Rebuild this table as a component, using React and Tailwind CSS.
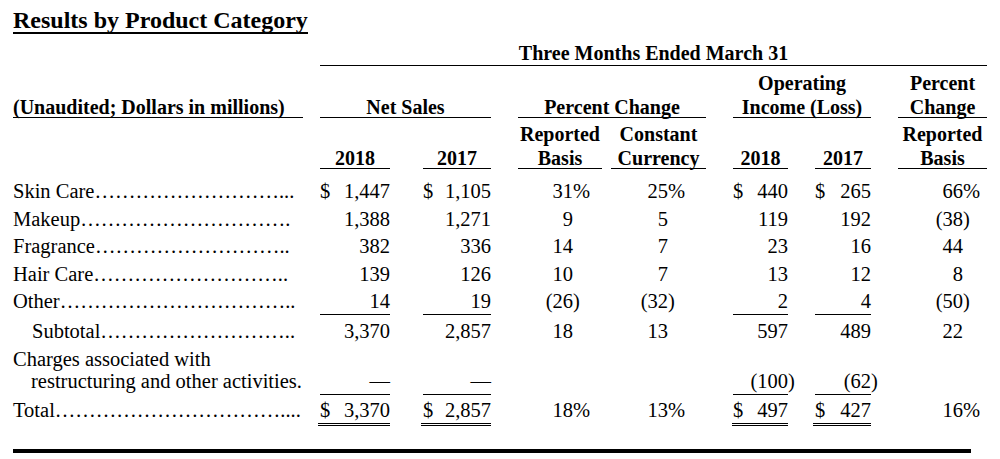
import React from "react";

const E = "\u2026";
const dots = (n, tail) => E.repeat(n) + tail;

function V({ v }) {
  if (!v) return null;
  if (v.startsWith("(")) {
    return (
      <>
        ({v.slice(1, -1)}
        <span className="inline-block w-0">)</span>
      </>
    );
  }
  if (v.endsWith("%")) {
    return (
      <>
        {v.slice(0, -1)}
        <span className="inline-block w-0">%</span>
      </>
    );
  }
  return v;
}

function Money({ cls, d, v }) {
  return (
    <div className={cls + " flex justify-between whitespace-nowrap"}>
      <span>{d ? "$" : ""}</span>
      <span>
        <V v={v} />
      </span>
    </div>
  );
}

const rows = [
  { label: "Skin Care", dots: dots(9, "..."), d: true, a: "1,447", b: "1,105", rb: "31%", cc: "25%", c: "440", e: "265", pc: "66%" },
  { label: "Makeup", dots: dots(10, "."), a: "1,388", b: "1,271", rb: "9", cc: "5", c: "119", e: "192", pc: "(38)" },
  { label: "Fragrance", dots: dots(9, ".."), a: "382", b: "336", rb: "14", cc: "7", c: "23", e: "16", pc: "44" },
  { label: "Hair Care", dots: dots(9, ".."), a: "139", b: "126", rb: "10", cc: "7", c: "13", e: "12", pc: "8" },
];

function DataRow({ r, rowCls, ul, indent }) {
  const u = ul ? " border-b border-black" : "";
  return (
    <div className={"flex " + rowCls}>
      <div className={"w-[290px] shrink-0 whitespace-nowrap" + (indent ? " pl-[19px]" : "")}>
        {r.label}
        {r.dots}
      </div>
      <Money cls={"ml-[17px] w-[70px] shrink-0" + u} d={r.d} v={r.a} />
      <Money cls={"ml-[33px] w-[68px] shrink-0" + u} d={r.d} v={r.b} />
      <div className="ml-[27px] w-[84px] shrink-0 text-right pr-[29px] whitespace-nowrap">
        <V v={r.rb} />
      </div>
      <div className="ml-[9px] w-[95px] shrink-0 text-right pr-[38px] whitespace-nowrap">
        <V v={r.cc} />
      </div>
      <Money cls={"ml-[27px] w-[55px] shrink-0" + u} d={r.d} v={r.c} />
      <Money cls={"ml-[27px] w-[56px] shrink-0" + u} d={r.d} v={r.e} />
      <div className="ml-[27px] w-[89px] shrink-0 text-right pr-[24px] whitespace-nowrap">
        <V v={r.pc} />
      </div>
    </div>
  );
}

export default function App() {
  return (
    <div className="min-h-[459px] w-[1000px] overflow-hidden bg-white text-black font-['Liberation_Serif','Times_New_Roman',serif] px-[13px] pt-[9px] flex flex-col">
      {/* Title */}
      <div className="self-start border-b-2 border-black text-[24px] font-bold leading-[23px] whitespace-nowrap">
        Results by Product Category
      </div>

      {/* Three Months Ended */}
      <div className="mt-[8px] ml-[307px] w-[667px] text-center font-bold text-[20px] leading-[23px] border-b border-black whitespace-nowrap">
        Three Months Ended March 31
      </div>

      {/* Header row B */}
      <div className="flex h-[52px] font-bold text-[20px] leading-[24px] whitespace-nowrap">
        <div className="w-[290px] shrink-0 flex flex-col justify-end border-b border-black">
          <div className="-mb-[2px]">(Unaudited; Dollars in millions)</div>
        </div>
        <div className="ml-[17px] w-[171px] shrink-0 flex flex-col justify-end text-center border-b border-black">
          <div className="-mb-[2px]">Net Sales</div>
        </div>
        <div className="ml-[27px] w-[188px] shrink-0 flex flex-col justify-end text-center border-b border-black">
          <div className="-mb-[2px]">Percent Change</div>
        </div>
        <div className="ml-[27px] w-[138px] shrink-0 flex flex-col justify-end text-center border-b border-black">
          <div className="-mb-[2px]">
            <div>Operating</div>
            <div>Income (Loss)</div>
          </div>
        </div>
        <div className="ml-[27px] w-[89px] shrink-0 flex flex-col justify-end text-center border-b border-black">
          <div className="-mb-[2px]">
            <div>Percent</div>
            <div>Change</div>
          </div>
        </div>
      </div>

      {/* Header row C */}
      <div className="flex h-[51px] font-bold text-[20px] leading-[24px] whitespace-nowrap">
        <div className="w-[290px] shrink-0" />
        <div className="ml-[17px] w-[70px] shrink-0 flex flex-col justify-end text-center border-b border-black">
          <div className="-mb-[2px]">2018</div>
        </div>
        <div className="ml-[33px] w-[68px] shrink-0 flex flex-col justify-end text-center border-b border-black">
          <div className="-mb-[2px]">2017</div>
        </div>
        <div className="ml-[27px] w-[84px] shrink-0 flex flex-col justify-end text-center border-b border-black">
          <div className="-mb-[2px]">
            <div>Reported</div>
            <div>Basis</div>
          </div>
        </div>
        <div className="ml-[9px] w-[95px] shrink-0 flex flex-col justify-end text-center border-b border-black">
          <div className="-mb-[2px]">
            <div>Constant</div>
            <div>Currency</div>
          </div>
        </div>
        <div className="ml-[27px] w-[55px] shrink-0 flex flex-col justify-end text-center border-b border-black">
          <div className="-mb-[2px]">2018</div>
        </div>
        <div className="ml-[27px] w-[56px] shrink-0 flex flex-col justify-end text-center border-b border-black">
          <div className="-mb-[2px]">2017</div>
        </div>
        <div className="ml-[27px] w-[89px] shrink-0 flex flex-col justify-end text-center border-b border-black">
          <div className="-mb-[2px]">
            <div>Reported</div>
            <div>Basis</div>
          </div>
        </div>
      </div>

      {/* Data */}
      <div className="mt-[9px] flex flex-col text-[20.5px]">
        {rows.map((r) => (
          <DataRow key={r.label} r={r} rowCls="h-[27.5px] leading-[27.5px]" />
        ))}
        <DataRow
          r={{ label: "Other", dots: dots(11, ".."), a: "14", b: "19", rb: "(26)", cc: "(32)", c: "2", e: "4", pc: "(50)" }}
          rowCls="h-[27px] leading-[26px]"
          ul
        />
        <div className="mt-[2px]">
          <DataRow
            r={{ label: "Subtotal", dots: dots(9, ".."), a: "3,370", b: "2,857", rb: "18", cc: "13", c: "597", e: "489", pc: "22" }}
            rowCls="h-[28px] leading-[28px]"
            indent
          />
        </div>

        {/* Charges */}
        <div className="mt-[3px] flex h-[47px] leading-[22px]">
          <div className="w-[290px] shrink-0 whitespace-nowrap">
            <div>Charges associated with</div>
            <div className="pl-[18px]">restructuring and other activities.</div>
          </div>
          <div className="ml-[17px] w-[70px] shrink-0 flex flex-col justify-end items-end pb-[2px] border-b border-black">
            <div>—</div>
          </div>
          <div className="ml-[33px] w-[68px] shrink-0 flex flex-col justify-end items-end pb-[2px] border-b border-black">
            <div>—</div>
          </div>
          <div className="ml-[27px] w-[84px] shrink-0" />
          <div className="ml-[9px] w-[95px] shrink-0" />
          <div className="ml-[27px] w-[55px] shrink-0 flex flex-col justify-end text-right pb-[2px] border-b border-black whitespace-nowrap">
            <div>
              <V v="(100)" />
            </div>
          </div>
          <div className="ml-[27px] w-[56px] shrink-0 flex flex-col justify-end text-right pb-[2px] border-b border-black whitespace-nowrap">
            <div>
              <V v="(62)" />
            </div>
          </div>
        </div>

        {/* Total */}
        <div className="mt-[3px] flex h-[28px] leading-[25px]">
          <div className="w-[290px] shrink-0 whitespace-nowrap">
            Total{dots(11, "....")}
          </div>
          <div className="ml-[15px] w-[72px] shrink-0 pl-[2px] flex justify-between border-b-[3px] border-double border-black">
            <span>$</span>
            <span>3,370</span>
          </div>
          <div className="ml-[31px] w-[70px] shrink-0 pl-[2px] flex justify-between border-b-[3px] border-double border-black">
            <span>$</span>
            <span>2,857</span>
          </div>
          <div className="ml-[27px] w-[84px] shrink-0 text-right pr-[29px] whitespace-nowrap">
            <V v="18%" />
          </div>
          <div className="ml-[9px] w-[95px] shrink-0 text-right pr-[38px] whitespace-nowrap">
            <V v="13%" />
          </div>
          <div className="ml-[26px] w-[56px] shrink-0 pl-[1px] flex justify-between border-b-[3px] border-double border-black">
            <span>$</span>
            <span>497</span>
          </div>
          <div className="ml-[25px] w-[58px] shrink-0 pl-[2px] flex justify-between border-b-[3px] border-double border-black">
            <span>$</span>
            <span>427</span>
          </div>
          <div className="ml-[27px] w-[89px] shrink-0 text-right pr-[24px] whitespace-nowrap">
            <V v="16%" />
          </div>
        </div>
      </div>

      {/* Bottom rule */}
      <div className="mt-[23px] h-[4px] w-[958px] bg-black" />
    </div>
  );
}
